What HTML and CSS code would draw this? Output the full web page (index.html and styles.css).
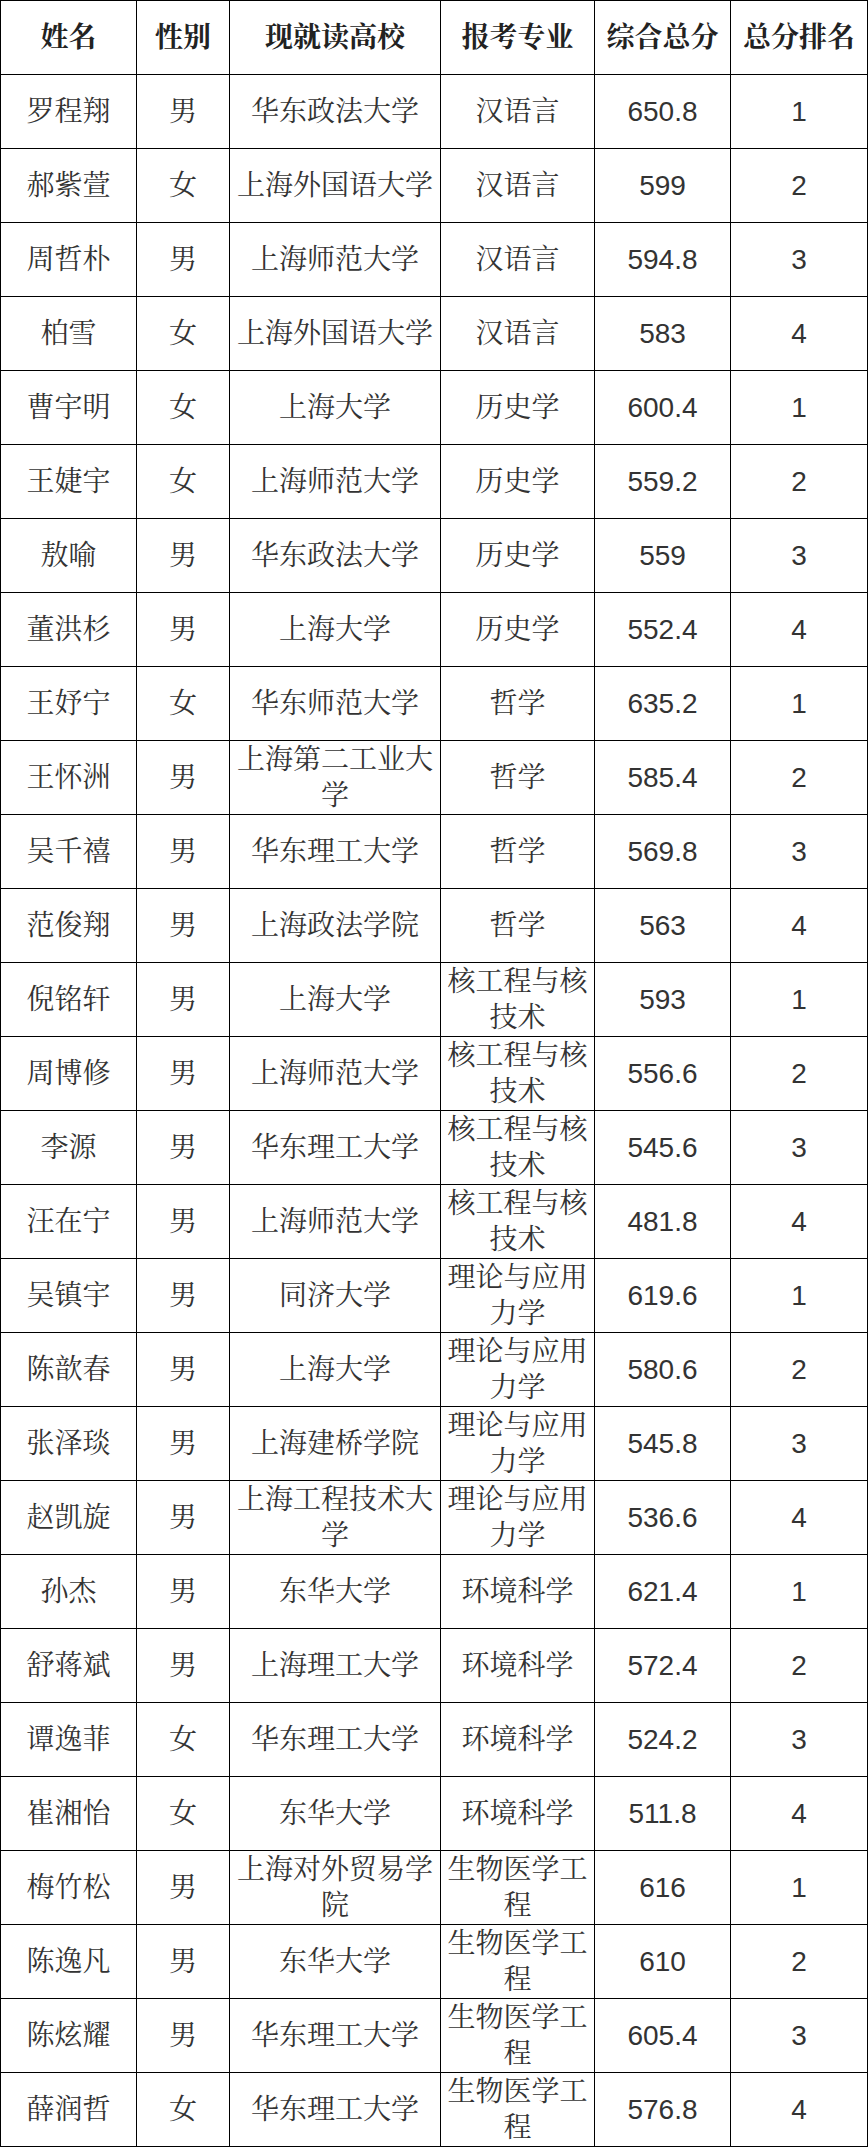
FILE: index.html
```html
<!DOCTYPE html>
<html lang="zh-CN">
<head>
<meta charset="utf-8">
<title>成绩表</title>
<link rel="stylesheet" href="styles.css">
</head>
<body>
<table class="score-table">
<colgroup>
<col class="c-name"><col class="c-sex"><col class="c-school"><col class="c-major"><col class="c-total"><col class="c-rank">
</colgroup>
<thead>
<tr><th>姓名</th><th>性别</th><th>现就读高校</th><th>报考专业</th><th>综合总分</th><th>总分排名</th></tr>
</thead>
<tbody>
<tr><td>罗程翔</td><td>男</td><td>华东政法大学</td><td>汉语言</td><td>650.8</td><td>1</td></tr>
<tr><td>郝紫萱</td><td>女</td><td>上海外国语大学</td><td>汉语言</td><td>599</td><td>2</td></tr>
<tr><td>周哲朴</td><td>男</td><td>上海师范大学</td><td>汉语言</td><td>594.8</td><td>3</td></tr>
<tr><td>柏雪</td><td>女</td><td>上海外国语大学</td><td>汉语言</td><td>583</td><td>4</td></tr>
<tr><td>曹宇明</td><td>女</td><td>上海大学</td><td>历史学</td><td>600.4</td><td>1</td></tr>
<tr><td>王婕宇</td><td>女</td><td>上海师范大学</td><td>历史学</td><td>559.2</td><td>2</td></tr>
<tr><td>敖喻</td><td>男</td><td>华东政法大学</td><td>历史学</td><td>559</td><td>3</td></tr>
<tr><td>董洪杉</td><td>男</td><td>上海大学</td><td>历史学</td><td>552.4</td><td>4</td></tr>
<tr><td>王妤宁</td><td>女</td><td>华东师范大学</td><td>哲学</td><td>635.2</td><td>1</td></tr>
<tr><td>王怀洲</td><td>男</td><td>上海第二工业大学</td><td>哲学</td><td>585.4</td><td>2</td></tr>
<tr><td>吴千禧</td><td>男</td><td>华东理工大学</td><td>哲学</td><td>569.8</td><td>3</td></tr>
<tr><td>范俊翔</td><td>男</td><td>上海政法学院</td><td>哲学</td><td>563</td><td>4</td></tr>
<tr><td>倪铭轩</td><td>男</td><td>上海大学</td><td>核工程与核技术</td><td>593</td><td>1</td></tr>
<tr><td>周博修</td><td>男</td><td>上海师范大学</td><td>核工程与核技术</td><td>556.6</td><td>2</td></tr>
<tr><td>李源</td><td>男</td><td>华东理工大学</td><td>核工程与核技术</td><td>545.6</td><td>3</td></tr>
<tr><td>汪在宁</td><td>男</td><td>上海师范大学</td><td>核工程与核技术</td><td>481.8</td><td>4</td></tr>
<tr><td>吴镇宇</td><td>男</td><td>同济大学</td><td>理论与应用力学</td><td>619.6</td><td>1</td></tr>
<tr><td>陈歆春</td><td>男</td><td>上海大学</td><td>理论与应用力学</td><td>580.6</td><td>2</td></tr>
<tr><td>张泽琰</td><td>男</td><td>上海建桥学院</td><td>理论与应用力学</td><td>545.8</td><td>3</td></tr>
<tr><td>赵凯旋</td><td>男</td><td>上海工程技术大学</td><td>理论与应用力学</td><td>536.6</td><td>4</td></tr>
<tr><td>孙杰</td><td>男</td><td>东华大学</td><td>环境科学</td><td>621.4</td><td>1</td></tr>
<tr><td>舒蒋斌</td><td>男</td><td>上海理工大学</td><td>环境科学</td><td>572.4</td><td>2</td></tr>
<tr><td>谭逸菲</td><td>女</td><td>华东理工大学</td><td>环境科学</td><td>524.2</td><td>3</td></tr>
<tr><td>崔湘怡</td><td>女</td><td>东华大学</td><td>环境科学</td><td>511.8</td><td>4</td></tr>
<tr><td>梅竹松</td><td>男</td><td>上海对外贸易学院</td><td>生物医学工程</td><td>616</td><td>1</td></tr>
<tr><td>陈逸凡</td><td>男</td><td>东华大学</td><td>生物医学工程</td><td>610</td><td>2</td></tr>
<tr><td>陈炫耀</td><td>男</td><td>华东理工大学</td><td>生物医学工程</td><td>605.4</td><td>3</td></tr>
<tr><td>薛润哲</td><td>女</td><td>华东理工大学</td><td>生物医学工程</td><td>576.8</td><td>4</td></tr>
</tbody>
</table>
</body>
</html>
```

FILE: styles.css
```css
html, body {
  margin: 0;
  padding: 0;
  background: #ffffff;
}

.score-table {
  border-collapse: collapse;
  table-layout: fixed;
  width: 867px;
  font-family: "Liberation Sans", "Noto Serif CJK SC", "Noto Sans CJK SC", sans-serif;
  font-size: 28px;
  line-height: 36px;
  color: #333333;
}

.c-name { width: 136px; }
.c-sex { width: 93px; }
.c-school { width: 211px; }
.c-major { width: 154px; }
.c-total { width: 136px; }
.c-rank { width: 137px; }

.score-table th,
.score-table td {
  border: 1px solid #000000;
  height: 74px;
  padding: 0 6px;
  text-align: center;
  vertical-align: middle;
  box-sizing: border-box;
}

.score-table th {
  font-weight: bold;
  color: #222222;
}
```
